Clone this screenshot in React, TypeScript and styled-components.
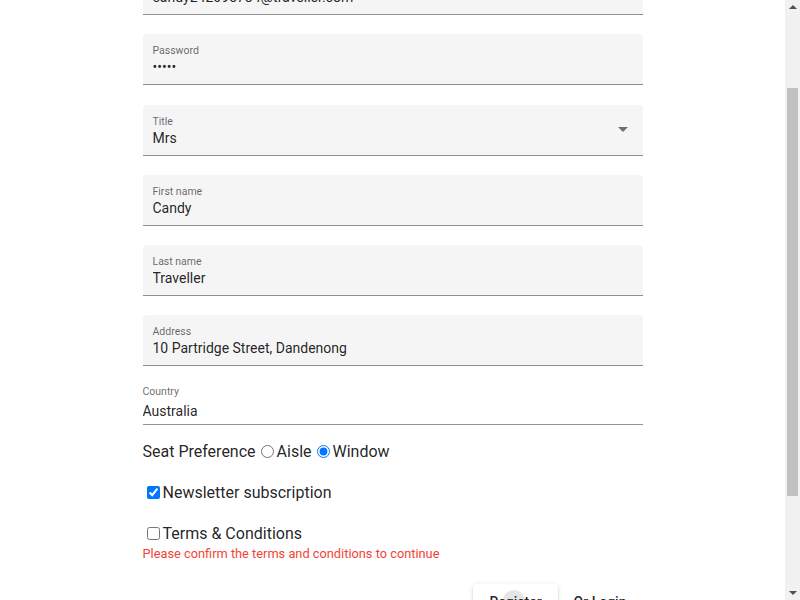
import { useLayoutEffect } from 'react'
import styled, { createGlobalStyle } from 'styled-components'

const GlobalStyle = createGlobalStyle`
  body {
    margin: 0;
    background: #fff;
    font-family: Roboto, "Liberation Sans", Arial, sans-serif;
    color: rgba(0, 0, 0, 0.87);
  }
`

interface FieldProps {
  label: string
  value: string
  type?: string
}

function FillField({ label, value, type = 'text' }: FieldProps) {
  return (
    <FillBox>
      <Infix>
        <Label>{label}</Label>
        <ValueInput type={type} defaultValue={value} readOnly />
      </Infix>
    </FillBox>
  )
}

function FillSelect({ label, value }: FieldProps) {
  return (
    <FillBox>
      <Infix>
        <Label>{label}</Label>
        <SelectValue>{value}</SelectValue>
      </Infix>
      <Arrow />
    </FillBox>
  )
}

// the browser scrollbar of the screenshot, drawn over the page's right edge
function Scrollbar() {
  return (
    <Track>
      <StepUp />
      <Thumb />
      <StepDown />
    </Track>
  )
}

export default function App() {
  useLayoutEffect(() => {
    window.scrollTo(0, 108)
  }, [])

  return (
    <>
      <GlobalStyle />
      <Page>
        <Heading>Register</Heading>
        <Form>
          <FillField label="Email" value="candy242095784@traveller.com" />
          <FillField label="Password" value="12345" type="password" />
          <FillSelect label="Title" value="Mrs" />
          <FillField label="First name" value="Candy" />
          <FillField label="Last name" value="Traveller" />
          <FillField label="Address" value="10 Partridge Street, Dandenong" />
          <PlainField>
            <Label>Country</Label>
            <ValueInput defaultValue="Australia" readOnly />
          </PlainField>

          <SeatRow>
            Seat Preference
            <input type="radio" name="seat" /> Aisle
            <input type="radio" name="seat" defaultChecked /> Window
          </SeatRow>

          <CheckRow>
            <input type="checkbox" defaultChecked />
            Newsletter subscription
          </CheckRow>

          <CheckRow>
            <input type="checkbox" />
            Terms &amp; Conditions
          </CheckRow>
          <ErrorText>Please confirm the terms and conditions to continue</ErrorText>

          <Actions>
            <RaisedButton type="button">Register</RaisedButton>
            <FlatButton type="button">Or Login</FlatButton>
          </Actions>
        </Form>
      </Page>
      <Scrollbar />
    </>
  )
}

const Page = styled.div`
  padding: 16px 15px 104px 0;
`

const Heading = styled.h2`
  margin: 0 0 24px;
  text-align: center;
  font-size: 24px;
  font-weight: 400;
  line-height: 32px;
`

const Form = styled.form`
  width: 500px;
  margin: 0 auto;
  display: flex;
  flex-direction: column;
`

const FillBox = styled.div`
  display: flex;
  align-items: center;
  height: 50px;
  padding: 0 15px 0 10px;
  margin-bottom: 19.25px;
  background: #f5f5f5;
  border-radius: 4px 4px 0 0;
  border-bottom: 1px solid rgba(0, 0, 0, 0.42);
`

const Infix = styled.div`
  flex: 1;
  display: flex;
  flex-direction: column;
  align-self: flex-start;
  padding-top: 10px;
`

const Label = styled.span`
  font-size: 10.5px;
  line-height: 13px;
  color: rgba(0, 0, 0, 0.6);
`

const ValueInput = styled.input`
  margin: 2px 0 0;
  padding: 0;
  border: 0;
  outline: none;
  background: transparent;
  font: inherit;
  font-size: 14px;
  line-height: 17px;
  height: 17px;
  color: rgba(0, 0, 0, 0.87);
`

const SelectValue = styled.span`
  margin-top: 2px;
  font-size: 14px;
  line-height: 17px;
`

const Arrow = styled.span`
  width: 0;
  height: 0;
  margin-top: -1px;
  border-left: 5px solid transparent;
  border-right: 5px solid transparent;
  border-top: 5px solid rgba(0, 0, 0, 0.54);
`

const PlainField = styled.div`
  display: flex;
  flex-direction: column;
  margin-top: -1px;
  padding-bottom: 4px;
  border-bottom: 1px solid rgba(0, 0, 0, 0.42);

  ${ValueInput} {
    margin-top: 5px;
  }
`

const SeatRow = styled.div`
  margin-top: 17px;
  font-size: 16px;
  line-height: 19px;
  display: flex;
  align-items: center;

  input {
    margin: 0 3px 0 5px;
  }
`

const CheckRow = styled.label`
  margin-top: 22px;
  display: flex;
  align-items: center;
  font-size: 16px;
  line-height: 19px;

  input {
    margin: 0 3px 0 4px;
  }
`

const ErrorText = styled.div`
  margin-top: 3px;
  font-size: 12.8px;
  line-height: 16px;
  color: #f44336;
`

const Actions = styled.div`
  display: flex;
  justify-content: flex-end;
  margin-top: 22px;
`

const ButtonBase = styled.button`
  position: relative;
  overflow: hidden;
  height: 36px;
  min-width: 64px;
  padding: 0 16px;
  border: 0;
  border-radius: 4px;
  font-family: Roboto, "Liberation Sans", Arial, sans-serif;
  font-size: 14px;
  font-weight: 500;
  line-height: 36px;
  color: rgba(0, 0, 0, 0.87);
  cursor: pointer;
`

const RaisedButton = styled(ButtonBase)`
  background: #fff;
  box-shadow: 0 3px 1px -2px rgba(0, 0, 0, 0.2), 0 2px 2px 0 rgba(0, 0, 0, 0.14),
    0 1px 5px 0 rgba(0, 0, 0, 0.12);

  &::after {
    content: '';
    position: absolute;
    left: 30px;
    top: 6px;
    width: 22px;
    height: 22px;
    border-radius: 50%;
    background: rgba(0, 0, 0, 0.1);
  }
`

const FlatButton = styled(ButtonBase)`
  background: transparent;
`

const Track = styled.div`
  position: fixed;
  top: 0;
  right: 0;
  width: 15px;
  height: 100vh;
  background: #f1f1f1;
  display: flex;
  flex-direction: column;
  align-items: center;
`

const StepUp = styled.span`
  margin-top: 5px;
  width: 0;
  height: 0;
  border-left: 4px solid transparent;
  border-right: 4px solid transparent;
  border-bottom: 4px solid #505050;
`

const Thumb = styled.span`
  margin-top: 79px;
  width: 11px;
  height: 408px;
  background: #c1c1c1;
`

const StepDown = styled.span`
  margin-top: auto;
  margin-bottom: 5px;
  width: 0;
  height: 0;
  border-left: 4px solid transparent;
  border-right: 4px solid transparent;
  border-top: 4px solid #505050;
`
